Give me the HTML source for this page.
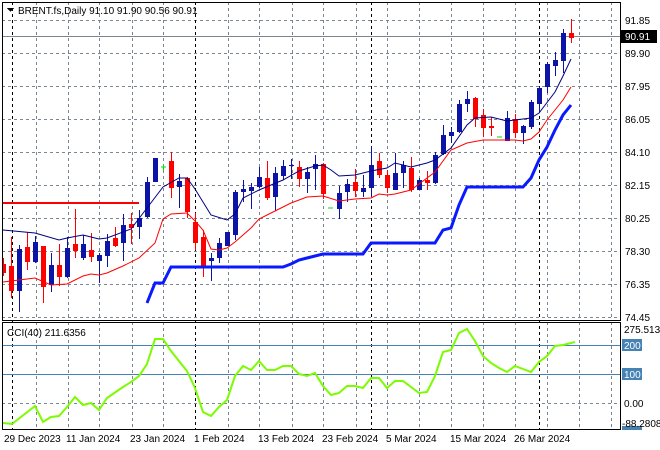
<!DOCTYPE html>
<html><head><meta charset="utf-8"><style>
html,body{margin:0;padding:0;background:#fff;width:660px;height:450px;overflow:hidden}
svg{display:block}
text{font-family:"Liberation Sans",sans-serif;font-size:10px;fill:#000}
</style></head><body>
<svg width="660" height="450" xmlns="http://www.w3.org/2000/svg" shape-rendering="crispEdges">
<rect width="660" height="450" fill="#fff"/>
<!-- grid main -->
<g stroke="#7a8694" stroke-width="1" stroke-dasharray="3,3">
<path d="M2 20.5H620M2 53.5H620M2 86.5H620M2 119.5H620M2 152.5H620M2 185.5H620M2 218.5H620M2 251.5H620M2 284.5H620M2 317.5H620"/>
<path d="M36.5 2V320M68.5 2V320M99.5 2V320M132.5 2V320M163.5 2V320M228.5 2V320M259.5 2V320M292.5 2V320M323.5 2V320M356.5 2V320M387.5 2V320M419.5 2V320M451.5 2V320M483.5 2V320M515.5 2V320M547.5 2V320M579.5 2V320M611.5 2V320"/>
<path d="M36.5 322V429M68.5 322V429M99.5 322V429M132.5 322V429M163.5 322V429M228.5 322V429M259.5 322V429M292.5 322V429M323.5 322V429M356.5 322V429M387.5 322V429M419.5 322V429M451.5 322V429M483.5 322V429M515.5 322V429M547.5 322V429M579.5 322V429M611.5 322V429"/>
<path d="M2 403.5H620"/>
</g>
<g stroke="#000" stroke-dasharray="3,3">
<path d="M12.5 2V429M195.5 2V429M371.5 2V429M539.5 2V429"/>
</g>
<!-- current price line -->
<path d="M2 36.5H620" stroke="#7a8694"/>
<!-- CCI levels -->
<path d="M2 345.5H620M2 374.5H620" stroke="#4682b4"/>
<!-- red horizontal -->
<path d="M3 203H139" stroke="#ff0000" stroke-width="2"/>
<!-- candles -->
<g id="c">
<g stroke="#ff0000" fill="#ff0000">
<path d="M3.5 258V276M11.5 237V298M27.5 232V270M43.5 246V303M59.5 244V286M75.5 209V258M91.5 233V262M115.5 227V247M131.5 213V244M171.5 152V198M187.5 177V218M195.5 213V250M203.5 230V277M267.5 161V200M299.5 161V187M323.5 163V199M355.5 169V197M379.5 153V178M387.5 170V193M411.5 157V192M427.5 171V190M475.5 97V127M483.5 109V137M491.5 117V136M515.5 114V138M571.5 19V43"/>
</g>
<g fill="#ff0000">
<rect x="2" y="264" width="4" height="9"/><rect x="9" y="266" width="5" height="25"/><rect x="25" y="247" width="5" height="15"/><rect x="41" y="246" width="5" height="41"/><rect x="57" y="265" width="5" height="12"/><rect x="73" y="244" width="5" height="7"/><rect x="89" y="250" width="5" height="7"/><rect x="113" y="238" width="5" height="8"/><rect x="129" y="224" width="5" height="4"/><rect x="169" y="161" width="5" height="27"/><rect x="185" y="178" width="5" height="34"/><rect x="193" y="222" width="5" height="21"/><rect x="201" y="237" width="5" height="30"/><rect x="265" y="178" width="5" height="20"/><rect x="297" y="167" width="5" height="12"/><rect x="321" y="164" width="5" height="30"/><rect x="353" y="182" width="5" height="9"/><rect x="377" y="161" width="5" height="14"/><rect x="385" y="175" width="5" height="13"/><rect x="409" y="168" width="5" height="22"/><rect x="425" y="180" width="5" height="3"/><rect x="473" y="98" width="5" height="21"/><rect x="481" y="115" width="5" height="13"/><rect x="489" y="126" width="5" height="2"/><rect x="513" y="119" width="5" height="14"/><rect x="569" y="33" width="5" height="5"/>
</g>
<g stroke="#0c14a8">
<path d="M19.5 245V312M35.5 236V263M51.5 253V292M67.5 237V278M83.5 235V260M99.5 253V283M107.5 234V267M123.5 214V261M139.5 210V239M147.5 177V218M155.5 158V182M179.5 174V208M211.5 253V281M219.5 238V263M227.5 232V246M235.5 190V240M243.5 180V202M251.5 183V209M259.5 167V188M275.5 167V211M283.5 160V180M291.5 159V179M307.5 167V193M315.5 155V190M339.5 186V219M347.5 179V202M363.5 175V197M371.5 146V197M395.5 153V190M403.5 161V188M419.5 178V190M435.5 152V184M443.5 125V155M451.5 127V143M459.5 100V133M467.5 91V112M507.5 111V141M523.5 125V144M531.5 100V129M539.5 87V113M547.5 62V93M555.5 52V76M563.5 29V73"/>
</g>
<g fill="#0c14a8">
<rect x="17" y="249" width="5" height="42"/><rect x="33" y="242" width="5" height="20"/><rect x="49" y="265" width="5" height="20"/><rect x="65" y="248" width="5" height="29"/><rect x="81" y="244" width="5" height="14"/><rect x="97" y="255" width="5" height="6"/><rect x="105" y="241" width="5" height="15"/><rect x="121" y="225" width="5" height="18"/><rect x="137" y="218" width="5" height="9"/><rect x="145" y="182" width="5" height="35"/><rect x="153" y="158" width="5" height="24"/><rect x="177" y="181" width="5" height="6"/><rect x="209" y="258" width="5" height="3"/><rect x="217" y="243" width="5" height="15"/><rect x="225" y="232" width="5" height="14"/><rect x="233" y="192" width="5" height="43"/><rect x="241" y="189" width="5" height="3"/><rect x="249" y="187" width="5" height="4"/><rect x="257" y="177" width="5" height="10"/><rect x="273" y="173" width="5" height="24"/><rect x="281" y="166" width="5" height="10"/><rect x="289" y="165" width="5" height="1"/><rect x="305" y="172" width="5" height="7"/><rect x="313" y="164" width="5" height="5"/><rect x="337" y="193" width="5" height="16"/><rect x="345" y="184" width="5" height="8"/><rect x="361" y="188" width="5" height="4"/><rect x="369" y="165" width="5" height="23"/><rect x="393" y="173" width="5" height="17"/><rect x="401" y="165" width="5" height="8"/><rect x="417" y="180" width="5" height="10"/><rect x="433" y="155" width="5" height="28"/><rect x="441" y="135" width="5" height="19"/><rect x="449" y="132" width="5" height="4"/><rect x="457" y="104" width="5" height="28"/><rect x="465" y="99" width="5" height="5"/><rect x="505" y="118" width="5" height="23"/><rect x="521" y="126" width="5" height="7"/><rect x="529" y="102" width="5" height="25"/><rect x="537" y="88" width="5" height="16"/><rect x="545" y="64" width="5" height="23"/><rect x="553" y="60" width="5" height="6"/><rect x="561" y="33" width="5" height="28"/>
</g>
<path d="M161 167h5M163.5 165v5M328 208h5M497 137h5" stroke="#00dd00"/>
</g>
<!-- lines -->
<g fill="none" shape-rendering="auto">
<polyline stroke="#000080" stroke-width="1" points="3,230 35,233 59,240 67,238 83,235 99,239 107,238 131,229 147,208 163,187 179,178 187,178 195,189 211,215 227,220 235,214 243,198 259,190 283,180 299,171 315,166 323,165 331,170 339,176 355,175 371,171 387,168 395,163 411,167 427,163 435,160 451,148 467,125 475,118 491,117 507,121 531,118 539,113 555,92 563,76 571,59"/>
<polyline stroke="#ff0000" stroke-width="1" points="3,282 35,278 51,285 67,284 83,276 91,274 99,275 107,273 123,266 139,258 155,243 163,219 171,214 187,213 195,221 203,230 211,249 219,250 227,248 235,242 251,228 259,219 275,211 291,203 307,197 323,196 339,201 355,199 371,198 379,194 387,195 395,194 411,190 435,172 451,150 467,143 483,140 515,140 523,141 531,139 539,132 547,120 563,100 571,87"/>
<polyline stroke="#0a1aff" stroke-width="3" points="147,303 155,283 163,283 171,267 283,267 291,264 299,260 307,258 315,256 323,254 363,254 371,243 435,243 443,230 451,228 459,205 467,187 523,187 531,178 539,160 547,147 555,130 563,115 571,105"/>
<polyline stroke="#7cfc00" stroke-width="2" points="3,423 12,424 35,406 43,422 51,417 59,416 67,407 75,397 83,405 91,403 99,410 107,398 123,387 131,382 139,376 147,364 155,339 163,339 171,351 187,371 195,388 203,412 211,416 219,407 227,400 235,376 243,366 251,370 259,361 267,370 275,370 283,366 291,366 299,374 307,376 315,373 323,386 331,395 339,393 347,386 355,386 363,388 371,378 379,378 387,388 395,381 403,381 419,393 427,392 435,376 443,352 451,350 459,333 467,329 475,341 483,356 491,363 499,368 507,372 515,366 523,369 531,372 539,362 547,356 555,346 563,345 575,342"/>
</g>
<!-- borders -->
<g stroke="#000" fill="none">
<rect x="2.5" y="2.5" width="618" height="318"/>
<rect x="2.5" y="322.5" width="618" height="107"/>
</g>
<!-- axis labels -->
<g>
<text x="625" y="24">91.85</text>
<text x="625" y="57">89.90</text>
<text x="625" y="90">87.95</text>
<text x="625" y="123">86.05</text>
<text x="625" y="156">84.10</text>
<text x="625" y="189">82.15</text>
<text x="625" y="222">80.25</text>
<text x="625" y="255">78.30</text>
<text x="625" y="288">76.35</text>
<text x="625" y="321">74.45</text>
<rect x="621" y="30" width="36" height="13" fill="#000"/>
<text x="625" y="40" style="fill:#fff">90.91</text>
<text x="624" y="333">275.5131</text>
<rect x="622" y="339" width="20" height="12" fill="#4682b4"/>
<text x="624" y="349" style="fill:#fff">200</text>
<rect x="622" y="368" width="20" height="12" fill="#4682b4"/>
<text x="624" y="378" style="fill:#fff">100</text>
<text x="624" y="407">0.00</text>
<rect x="622" y="426" width="20" height="4" fill="#4682b4"/>
<text x="622" y="427">-88.2808</text>
</g>
<g>
<text x="4" y="442">29 Dec 2023</text>
<text x="66" y="442">11 Jan 2024</text>
<text x="130" y="442">23 Jan 2024</text>
<text x="194" y="442">1 Feb 2024</text>
<text x="258" y="442">13 Feb 2024</text>
<text x="322" y="442">23 Feb 2024</text>
<text x="386" y="442">5 Mar 2024</text>
<text x="450" y="442">15 Mar 2024</text>
<text x="514" y="442">26 Mar 2024</text>
</g>
<path d="M7 8h7l-3.5 4z" fill="#000"/>
<text x="18" y="14">BRENT.fs,Daily  91.10 91.90 90.56 90.91</text>
<text x="7" y="336">CCI(40) 211.6356</text>
</svg>
</body></html>
